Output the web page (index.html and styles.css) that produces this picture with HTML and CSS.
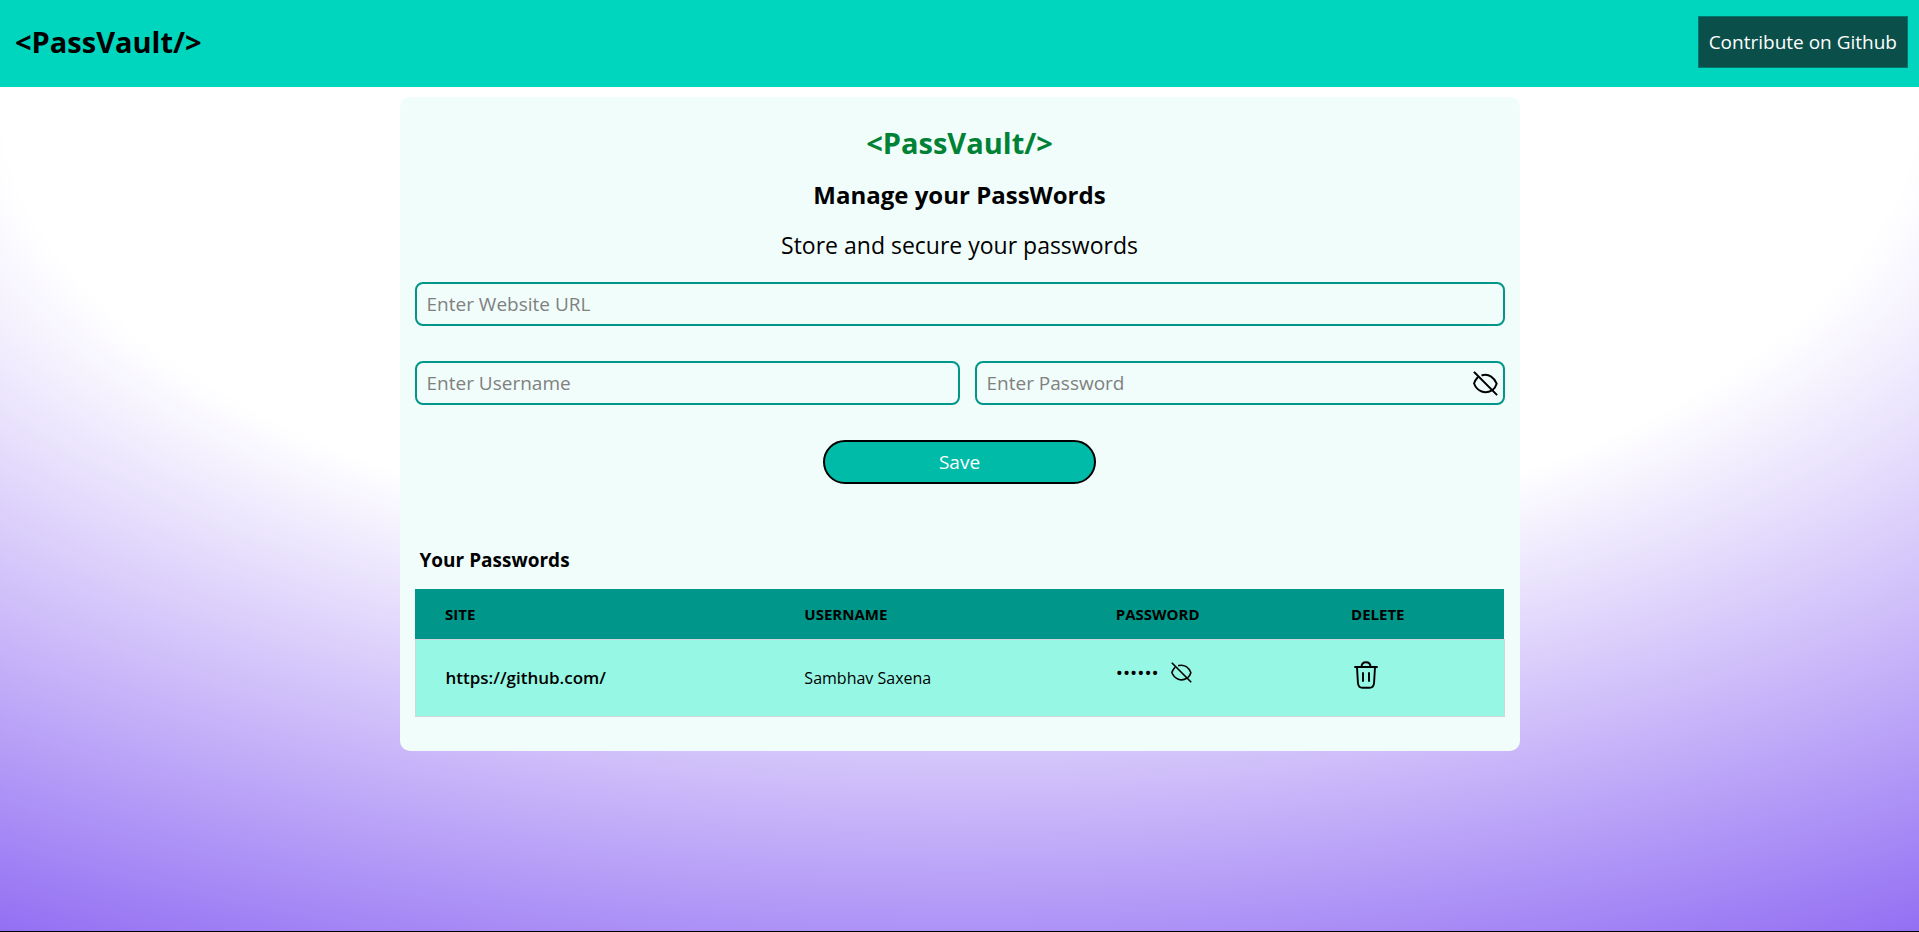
FILE: index.html
```html
<!DOCTYPE html>
<html lang="en">
<head>
<meta charset="utf-8">
<meta name="viewport" content="width=device-width, initial-scale=1">
<title>PassVault</title>
<link rel="stylesheet" href="styles.css">
</head>
<body>
<header class="navbar">
  <div class="logo">&lt;PassVault/&gt;</div>
  <button class="contribute" type="button">Contribute on Github</button>
</header>
<main class="page">
  <section class="card">
    <h1 class="title">&lt;PassVault/&gt;</h1>
    <h2 class="subtitle">Manage your PassWords</h2>
    <p class="tagline">Store and secure your passwords</p>
    <form class="form">
      <input class="field" type="text" placeholder="Enter Website URL" aria-label="Website URL">
      <div class="form-row">
        <input class="field field-user" type="text" placeholder="Enter Username" aria-label="Username">
        <div class="password-box">
          <input class="field" type="password" placeholder="Enter Password" aria-label="Password">
          <button class="icon-button toggle" type="button" aria-label="Show password">
            <svg class="eye-large" viewBox="0 0 24 24" fill="none" stroke="currentColor" stroke-width="1.9" stroke-linecap="square"><path d="M1.5 1.5 22.5 22.5"/><path d="M9 4C15.5 2.5 20.5 6.5 22.7 12.2C22 14.5 20.8 16.5 19 18"/><path d="M4.2 6.5C2.800 8 1.700 9.700 1 12C4 19.800 12 22.500 18 18.600"/></svg>
          </button>
        </div>
      </div>
      <button class="save" type="button">Save</button>
    </form>
    <h2 class="list-title">Your Passwords</h2>
    <table class="passwords">
      <thead>
        <tr>
          <th class="col-site" scope="col">SITE</th>
          <th class="col-user" scope="col">USERNAME</th>
          <th class="col-password" scope="col">PASSWORD</th>
          <th scope="col">DELETE</th>
        </tr>
      </thead>
      <tbody>
        <tr>
          <th class="site" scope="row"><a href="https://github.com/">https://github.com/</a></th>
          <td>Sambhav Saxena</td>
          <td>
            <div class="secret">
              <span>••••••</span>
              <button class="icon-button" type="button" aria-label="Show password">
                <svg class="eye-small" viewBox="0 0 24 24" fill="none" stroke="currentColor" stroke-width="1.8" stroke-linecap="square"><path d="M1.5 1.5 22.5 22.5"/><path d="M9 4C15.5 2.5 20.5 6.5 22.7 12.2C22 14.5 20.8 16.5 19 18"/><path d="M4.2 6.5C2.800 8 1.700 9.700 1 12C4 19.800 12 22.500 18 18.600"/></svg>
              </button>
            </div>
          </td>
          <td>
            <button class="icon-button delete" type="button" aria-label="Delete">
              <svg class="trash" viewBox="0 0 24 28" fill="none" stroke="currentColor" stroke-width="1.9" stroke-linecap="round"><path d="M1 6H23"/><path d="M7.5 6C7.5 3 9 1.2 12 1.2S16.5 3 16.5 6"/><path d="M3 6 3.9 21.5C4.1 25 5.5 26.8 8.5 26.8H15.5C18.5 26.8 19.9 25 20.1 21.5L21 6"/><path d="M9 12V20M15 12V20"/></svg>
            </button>
          </td>
        </tr>
      </tbody>
    </table>
  </section>
</main>
<footer class="footer"></footer>
</body>
</html>
```

FILE: styles.css
```css
* {
  box-sizing: border-box;
}

body {
  margin: 0;
  min-height: 100vh;
  display: flex;
  flex-direction: column;
  font-family: "Segoe UI", "Open Sans", "Noto Sans", sans-serif;
  color: #000;
  background: radial-gradient(125% 125% at 50% 10%, #fff 40%, #63e 100%);
}

h1, h2, p {
  margin: 0;
}

button, input {
  font: inherit;
  color: inherit;
}

button {
  cursor: pointer;
}

.navbar {
  display: flex;
  align-items: center;
  justify-content: space-between;
  padding: 16px 11px 19px 15px;
  background: #00d5be;
}

.logo, .title {
  font-size: 29px;
  line-height: 36px;
  font-weight: 700;
}

.contribute {
  height: 52px;
  padding: 0 10px;
  border: 1px solid #00786f;
  background: #0b4f4a;
  color: #fff;
  font-size: 19px;
}

.page {
  flex: 1;
  padding: 10px;
}

.card {
  max-width: 1120px;
  margin: 0 auto;
  padding: 28px 15px 34px;
  border-radius: 10px;
  background: #f0fdfb;
}

.title, .subtitle, .tagline {
  text-align: center;
}

.title {
  color: #008236;
}

.subtitle, .tagline {
  margin-top: 18px;
  font-size: 24px;
  line-height: 32px;
}

.tagline {
  font-size: 23px;
}

.form {
  display: flex;
  flex-direction: column;
  gap: 35px;
  margin-top: 21px;
}

.form-row {
  display: flex;
  gap: 15px;
}

.field {
  width: 100%;
  height: 44px;
  padding: 0 10px;
  border: 2px solid #009689;
  border-radius: 8px;
  background: transparent;
  font-size: 19px;
}

.field::placeholder {
  color: #808080;
}

.field-user {
  flex: none;
  width: 50%;
}

.password-box {
  position: relative;
  flex: 1;
}

.icon-button {
  display: flex;
  padding: 0;
  border: 0;
  background: none;
}

.toggle {
  position: absolute;
  top: 10px;
  right: 7px;
}

.eye-large {
  width: 25px;
  height: 25px;
}

.eye-small {
  width: 21px;
  height: 21px;
}

.trash {
  width: 24px;
  height: 28px;
}

.save {
  align-self: center;
  width: 25%;
  height: 44px;
  border: 2px solid #000;
  border-radius: 22px;
  background: #00bba7;
  color: #fff;
  font-size: 19px;
}

.list-title {
  margin: 62px 5px 15px;
  font-size: 19px;
  line-height: 28px;
}

.passwords {
  width: 100%;
  table-layout: fixed;
  border-collapse: collapse;
  text-align: left;
}

.passwords th, .passwords td {
  padding: 0 30px;
}

.passwords thead th {
  height: 50px;
  background: #009689;
  font-size: 15px;
}

.col-site {
  width: 33%;
}

.col-user {
  width: 28.6%;
}

.col-password {
  width: 21.6%;
}

.passwords tbody tr {
  height: 77px;
  border: 1px solid #d1d5dc;
  background: #96f7e4;
  font-size: 16px;
}

.passwords .site {
  font-size: 17px;
  font-weight: 600;
}

.site a {
  color: inherit;
  text-decoration: none;
}

.secret {
  display: flex;
  align-items: center;
  gap: 12px;
  padding-bottom: 10px;
  font-size: 19px;
}

.delete {
  margin: 0 0 6px 3px;
}

.footer {
  height: 1px;
  background: #000;
}
```
